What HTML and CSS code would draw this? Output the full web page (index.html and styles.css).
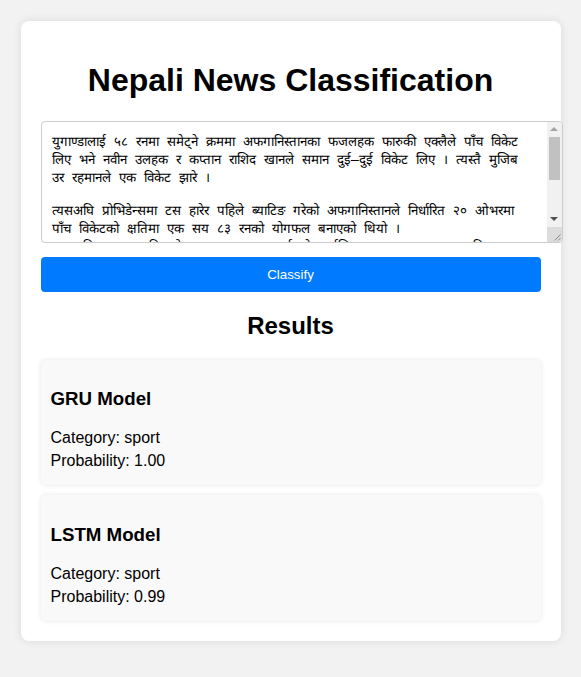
FILE: index.html
```html
<!DOCTYPE html>
<html lang="en">
<head>
<meta charset="UTF-8">
<title>Nepali News Classification</title>
<link rel="stylesheet" href="styles.css">
</head>
<body>
<div class="container">
  <h1>Nepali News Classification</h1>
  <form class="form">
    <div class="input-wrap">
      <textarea class="news-input" name="text">युगाण्डालाई ५८ रनमा समेट्ने क्रममा अफगानिस्तानका फजलहक फारुकी एक्लैले पाँच विकेट लिए भने नवीन उलहक र कप्तान राशिद खानले समान दुई–दुई विकेट लिए । त्यस्तै मुजिब उर रहमानले एक विकेट झारे ।

त्यसअघि प्रोभिडेन्समा टस हारेर पहिले ब्याटिङ गरेको अफगानिस्तानले निर्धारित २० ओभरमा पाँच विकेटको क्षतिमा एक सय ८३ रनको योगफल बनाएको थियो ।
अफगानिस्तानका लागि ओपनर रहमानुल्लाह गुर्बाजले सर्वाधिक ७६ रन बनाए । इब्राहिम जादरानले ७० रन जोडे ।</textarea>
      <div class="scrollbar" aria-hidden="true">
        <div class="sb-btn sb-up"></div>
        <div class="sb-track"><div class="sb-thumb"></div></div>
        <div class="sb-btn sb-down"></div>
        <div class="sb-corner">
          <svg width="15" height="15" viewBox="0 0 15 15"><path d="M13.5 7.5 L7.5 13.5 M13.5 11 L11 13.5" stroke="#8a8a8a" stroke-width="1" fill="none"/></svg>
        </div>
      </div>
    </div>
    <button type="button" class="classify-btn">Classify</button>
  </form>
  <h2>Results</h2>
  <div class="result-card">
    <h3>GRU Model</h3>
    <p>Category: sport</p>
    <p>Probability: 1.00</p>
  </div>
  <div class="result-card">
    <h3>LSTM Model</h3>
    <p>Category: sport</p>
    <p>Probability: 0.99</p>
  </div>
</div>
</body>
</html>
```
FILE: styles.css
```css
body {
  margin: 0;
  padding: 21px 20px 20px;
  background-color: #f2f2f2;
  font-family: "Liberation Sans", Arial, sans-serif;
}

.container {
  max-width: 500px;
  margin: 0 auto;
  padding: 20px;
  background-color: #fff;
  border-radius: 8px;
  box-shadow: 0 0 10px rgba(0, 0, 0, 0.1);
}

h1 {
  text-align: center;
  font-size: 2em;
}

h2 {
  text-align: center;
  font-size: 1.5em;
}

.input-wrap {
  position: relative;
  width: 522px;
  height: 122px;
}

.news-input {
  display: block;
  width: calc(100% - 37px);
  height: 100px;
  padding: 10px 25px 10px 10px;
  border: 1px solid #ccc;
  border-radius: 4px;
  overflow: hidden;
  resize: none;
}

.scrollbar {
  position: absolute;
  top: 1px;
  right: 1px;
  bottom: 1px;
  width: 15px;
  display: flex;
  flex-direction: column;
  background: #f1f1f1;
  border-radius: 0 3px 3px 0;
  overflow: hidden;
}

.sb-btn {
  height: 15px;
  display: flex;
  align-items: center;
  justify-content: center;
}

.sb-up::before,
.sb-down::before {
  content: "";
  width: 0;
  height: 0;
  border-left: 4px solid transparent;
  border-right: 4px solid transparent;
}

.sb-up::before {
  border-bottom: 4px solid #a3a3a3;
}

.sb-down::before {
  border-top: 4px solid #505050;
}

.sb-track {
  flex: 1;
  padding: 0 2px;
}

.sb-thumb {
  height: 43px;
  background: #c1c1c1;
}

.sb-corner {
  height: 15px;
  background: #dcdcdc;
}

.sb-corner svg {
  display: block;
}

.classify-btn {
  display: block;
  width: 100%;
  margin-top: 14px;
  padding: 10px;
  border: none;
  border-radius: 4px;
  background-color: #007bff;
  color: #fff;
  font-family: "Liberation Sans", Arial, sans-serif;
  cursor: pointer;
}

.result-card {
  margin-top: 10px;
  padding: 10px;
  background-color: #f9f9f9;
  border-radius: 5px;
  box-shadow: 0 0 5px rgba(0, 0, 0, 0.1);
}

.result-card p {
  margin: 5px 0;
}
```
